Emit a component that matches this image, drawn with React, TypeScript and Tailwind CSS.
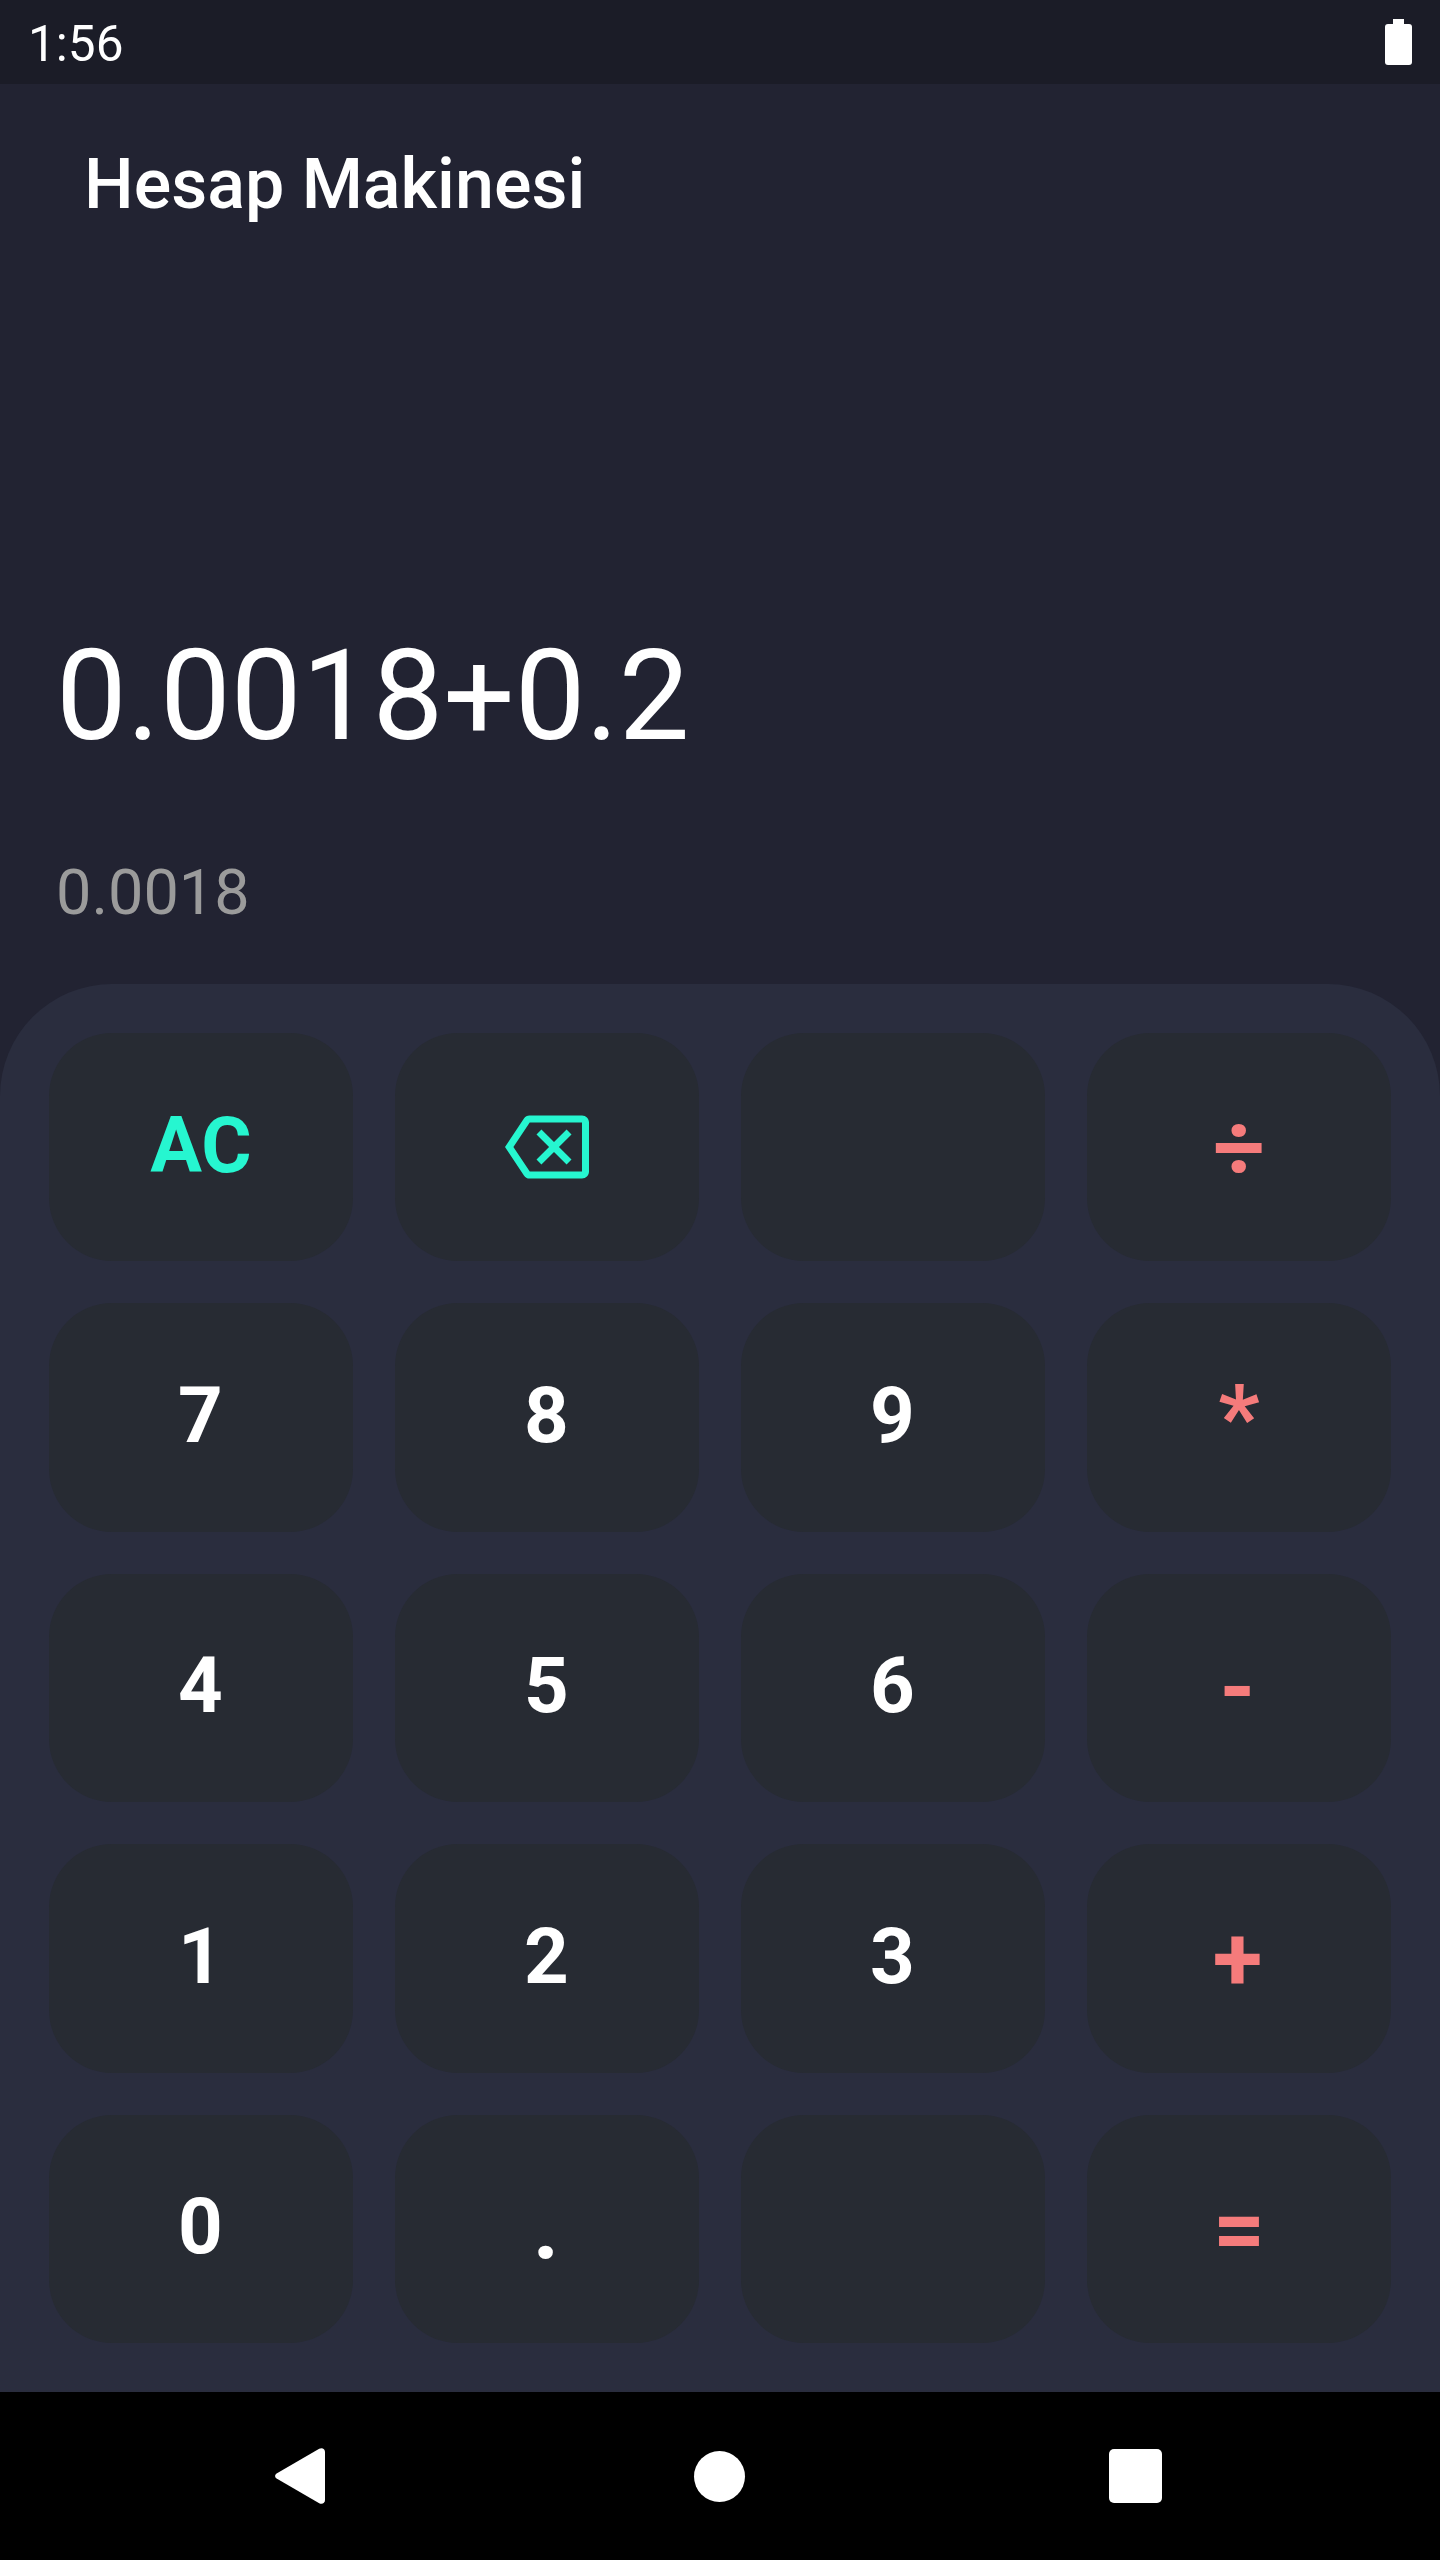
import { MdOutlineBackspace } from "react-icons/md";
import clsx from "clsx";

type KeyType = "action" | "number" | "dot" | "operator" | "sign" | "empty";

interface CalcKey {
  label: string;
  type: KeyType;
}

const keys: CalcKey[] = [
  { label: "AC", type: "action" },
  { label: "backspace", type: "action" },
  { label: "", type: "empty" },
  { label: "÷", type: "operator" },
  { label: "7", type: "number" },
  { label: "8", type: "number" },
  { label: "9", type: "number" },
  { label: "*", type: "operator" },
  { label: "4", type: "number" },
  { label: "5", type: "number" },
  { label: "6", type: "number" },
  { label: "-", type: "sign" },
  { label: "1", type: "number" },
  { label: "2", type: "number" },
  { label: "3", type: "number" },
  { label: "+", type: "sign" },
  { label: "0", type: "number" },
  { label: ".", type: "dot" },
  { label: "", type: "empty" },
  { label: "=", type: "operator" },
];

const keyStyles: Record<KeyType, string> = {
  action: "text-[77px] text-[#26f6d0] pb-px",
  number: "text-[78px] text-white pb-[3px] pr-px",
  dot: "text-[91px] text-white pr-[2px]",
  operator: "text-[91px] text-[#f57b7b] pt-[2px]",
  sign: "text-[91px] text-[#f57b7b] pt-[2px] pr-[3px]",
  empty: "",
};

function StatusBar() {
  return (
    <div className="flex h-[84px] items-center justify-between bg-[#1b1c27] px-7">
      <span className="pt-1.5 text-[49.5px] leading-none">1:56</span>
      <svg width="27" height="46" viewBox="0 0 27 46" fill="#fff">
        <rect x="8" y="0" width="11" height="8" />
        <rect x="0" y="5" width="27" height="41" rx="3" />
      </svg>
    </div>
  );
}

function Key({ label, type }: CalcKey) {
  return (
    <button
      className={clsx(
        "flex items-center justify-center rounded-[63px] bg-[#272b33] font-bold leading-none",
        keyStyles[type]
      )}
    >
      {label === "backspace" ? <MdOutlineBackspace size={84} /> : label}
    </button>
  );
}

function NavBar() {
  return (
    <div className="flex h-[168px] items-center justify-between bg-black pl-[275px] pr-[278px]">
      <svg width="50" height="56" viewBox="0 0 50 56" fill="#fff">
        <path d="M1.6 25.4 44.2.8C47 -.8 50 .8 50 4V52C50 55.2 47 56.8 44.2 55.2L1.6 30.6C-.4 29.4 -.4 26.6 1.6 25.4Z" />
      </svg>
      <div className="ml-[5px] h-[51px] w-[51px] rounded-full bg-white" />
      <div className="h-[54px] w-[53px] rounded-[5px] bg-white" />
    </div>
  );
}

export default function App() {
  return (
    <div className="flex h-[2560px] w-[1440px] flex-col overflow-hidden bg-[#222332] font-[Roboto,sans-serif] text-white">
      <StatusBar />

      {/* Display */}
      <div className="flex flex-1 flex-col">
        <h1 className="px-[84px] pt-[59px] text-[70px] font-medium leading-[82px]">
          Hesap Makinesi
        </h1>
        <div className="mt-auto px-14 pb-[54px]">
          <div className="text-[126px] leading-[148px]">0.0018+0.2</div>
          <div className="mt-[86px] text-[63px] leading-[74px] text-[#9b9b9b]">
            0.0018
          </div>
        </div>
      </div>

      {/* Keypad */}
      <div className="grid h-[1408px] grid-cols-4 grid-rows-5 gap-[42px] rounded-t-[112px] bg-[#2a2d3e] p-[49px]">
        {keys.map((key, i) => (
          <Key key={i} {...key} />
        ))}
      </div>

      <NavBar />
    </div>
  );
}
